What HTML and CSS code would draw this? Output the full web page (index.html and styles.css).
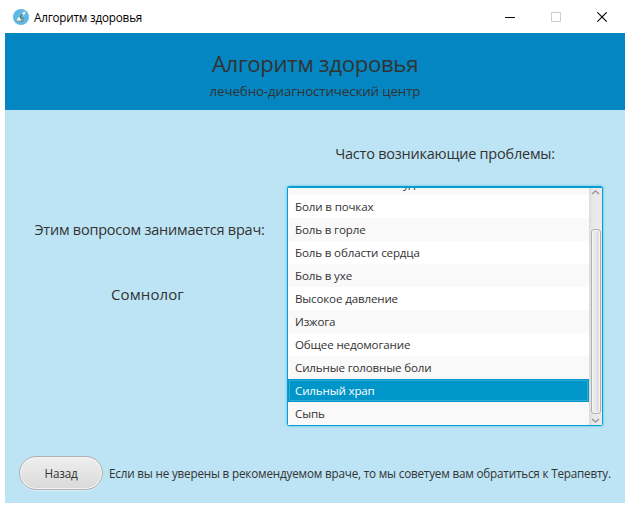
FILE: index.html
```html
<!DOCTYPE html>
<html lang="ru">
<head>
<meta charset="utf-8">
<title>Алгоритм здоровья</title>
<link rel="stylesheet" href="styles.css">
</head>
<body>
<div class="titlebar">
  <svg class="logo" width="16" height="16" viewBox="0 0 16 16"><circle cx="8" cy="8" r="8" fill="#5bb9e5"/><path d="M12 3.2 9.2 5.8" fill="none" stroke="#f3eee5" stroke-width="2.4"/><path d="M9.6 5 7 8.2l2.4 1.6" fill="none" stroke="#55646a" stroke-width="1.1"/><path d="M4 9.6 6.4 7.4l1.6 3.4L6.6 12H4.4z" fill="#f1ede4"/><path d="M4.5 12.4h5.2c1-1.4.9-2.8.2-4.2" fill="none" stroke="#a57a56" stroke-width=".9"/></svg>
  <span class="window-name">Алгоритм здоровья</span>
  <div class="controls">
    <svg width="11" height="11" viewBox="0 0 11 11"><path d="M0 5.5h10" stroke="#000"/></svg>
    <svg width="11" height="11" viewBox="0 0 11 11"><path d="M.5.5h9v9h-9z" fill="none" stroke="#ccc"/></svg>
    <svg width="11" height="11" viewBox="0 0 11 11"><path d="m.3.3 9.4 9.4M9.7.3.3 9.7" stroke="#000" stroke-width="1.15"/></svg>
  </div>
</div>
<div class="window">
  <header class="header">
    <h1 class="title"><span>Алгоритм здоровья</span></h1>
    <p class="subtitle"><span>лечебно-диагностический центр</span></p>
  </header>
  <main class="content">
    <section class="doctor">
      <p class="label doctor-label"><span>Этим вопросом занимается врач:</span></p>
      <p class="label doctor-name"><span>Сомнолог</span></p>
    </section>
    <section class="problems">
      <p class="label problems-label"><span>Часто возникающие проблемы:</span></p>
      <div class="list">
        <ul class="items">
          <li class="item"><span>Боли в области желудка</span></li>
          <li class="item"><span>Боли в почках</span></li>
          <li class="item"><span>Боль в горле</span></li>
          <li class="item"><span>Боль в области сердца</span></li>
          <li class="item"><span>Боль в ухе</span></li>
          <li class="item"><span>Высокое давление</span></li>
          <li class="item"><span>Изжога</span></li>
          <li class="item"><span>Общее недомогание</span></li>
          <li class="item"><span>Сильные головные боли</span></li>
          <li class="item selected"><span>Сильный храп</span></li>
          <li class="item"><span>Сыпь</span></li>
        </ul>
        <div class="scrollbar">
          <svg width="9" height="5" viewBox="0 0 9 5"><path d="m1 4 3.5-3L8 4" fill="none" stroke="#999" stroke-width="1.5"/></svg>
          <div class="thumb"></div>
          <svg width="9" height="5" viewBox="0 0 9 5"><path d="m1 1 3.5 3L8 1" fill="none" stroke="#999" stroke-width="1.5"/></svg>
        </div>
      </div>
    </section>
  </main>
  <footer class="footer">
    <button class="back"><span>Назад</span></button>
    <p class="hint"><span>Если вы не уверены в рекомендуемом враче, то мы советуем вам обратиться к Терапевту.</span></p>
  </footer>
</div>
</body>
</html>
```
FILE: styles.css
```css
* { box-sizing: border-box; }
body { margin: 0; width: 628px; height: 507px; overflow: hidden; background: #fff; color: #333; font-family: "Open Sans", "Noto Sans", sans-serif; }
h1, p, ul { margin: 0; padding: 0; font-weight: 400; white-space: nowrap; }
.titlebar { display: flex; align-items: center; height: 33px; padding: 1px 20px 0 13px; color: #000; font-size: 11.7px; }
.window-name { margin-left: 5px; letter-spacing: -.2px; }
.controls { display: flex; gap: 35px; margin-left: auto; }
.window { width: 620px; height: 470px; margin-left: 5px; background: #bde4f4; }
.header { height: 77px; padding-top: 14px; background: #0386c1; text-align: center; }
.title { font-size: 22.2px; line-height: 34px; letter-spacing: -.32px; }
.subtitle { font-size: 13.3px; line-height: 20px; letter-spacing: -.1px; }
.content { display: flex; height: 337px; }
.doctor { width: 282px; padding: 109px 0 0 7px; text-align: center; }
.label { font-size: 14.5px; line-height: 22px; letter-spacing: -.23px; }
.doctor-name { margin: 42px 4px 0 0; font-size: 15px; letter-spacing: .1px; }
.problems { width: 316px; padding-top: 33px; text-align: center; }
.list { display: flex; height: 240px; margin-top: 21px; padding: 2px 1px 1px; border-radius: 3px; background: #039ed3; box-shadow: 0 0 2px 1px #8bd2ee; overflow: hidden; text-align: left; }
.items { display: flex; flex-direction: column; justify-content: flex-end; flex: 1; overflow: hidden; list-style: none; font-size: 11.6px; letter-spacing: -.16px; }
.item { flex: none; height: 23px; padding-left: 7px; line-height: 24px; background: #fff; }
.item:nth-child(odd) { background: #f9f9f9; }
.item.selected { color: #fff; background: #0096c9; box-shadow: inset 0 0 0 1px #0096c9, inset 0 0 0 2px #32abd4; }
.scrollbar { display: flex; flex-direction: column; align-items: center; width: 13px; padding: 2px 0; background: linear-gradient(90deg, #dcdcdc, #e8e8e8 30%, #ececec); }
.thumb { flex: none; width: 10px; height: 185px; margin: 34px 0 4px 1px; border: 1px solid #b0b0b0; border-radius: 3px; background: linear-gradient(90deg, #f2f2f2, #dadada); box-shadow: inset 0 0 0 1px #f5f5f5; }
.footer { display: flex; align-items: flex-start; padding: 9px 0 0 14px; }
.back { flex: none; width: 84px; height: 34px; padding: 0; border: 1px solid #b0b0b0; border-radius: 17px; background: linear-gradient(#efefef, #d9d9d9); box-shadow: inset 0 0 0 1px #f3f3f3, 0 1px 0 #d9effa; color: #333; font: 11.7px "Open Sans", "Noto Sans", sans-serif; letter-spacing: -.2px; }
.hint { margin-left: 6px; font-size: 11.7px; line-height: 35px; letter-spacing: -.19px; }
```
